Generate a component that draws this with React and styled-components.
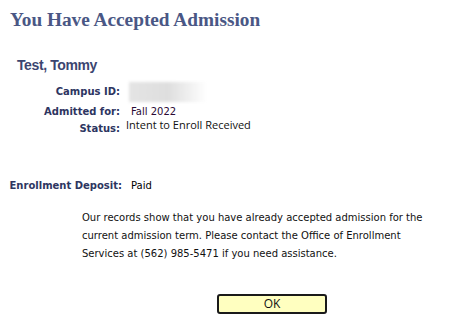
import React from "react";
import styled, { createGlobalStyle } from "styled-components";

const Global = createGlobalStyle`
  html, body { margin: 0; padding: 0; background: #ffffff; }
  body { width: 456px; height: 332px; overflow: hidden; }
`;

const Page = styled.div`
  width: 456px;
  height: 332px;
  box-sizing: border-box;
  font-family: "DejaVu Sans", Verdana, sans-serif;
  color: #000;
`;

const Title = styled.h1`
  margin: 0;
  padding: 9px 0 0 10px;
  font-family: "Liberation Serif", "Times New Roman", serif;
  font-weight: bold;
  font-size: 19.3px;
  line-height: 22px;
  color: #4a5785;
`;

const Name = styled.h2`
  margin: 0;
  padding: 26px 0 0 17px;
  font-family: "Liberation Sans", Arial, sans-serif;
  font-weight: bold;
  font-size: 14px;
  line-height: 16px;
  letter-spacing: -0.4px;
  color: #3b4570;
`;

const Info = styled.div`
  display: grid;
  grid-template-columns: 112px auto;
  column-gap: 11px;
  align-items: center;
  padding-left: 8px;
  margin-top: ${(p) => p.$top || 0}px;
`;

const Label = styled.div`
  display: flex;
  justify-content: flex-end;
  white-space: nowrap;
  font-weight: bold;
  font-size: 10px;
  color: #2d3561;
  height: ${(p) => p.$h || 18}px;
  line-height: ${(p) => p.$h || 18}px;
  margin-right: ${(p) => p.$shift || 0}px;
`;

const Value = styled.div`
  font-size: 10px;
  color: ${(p) => p.$color || "#000"};
  height: ${(p) => p.$h || 18}px;
  line-height: ${(p) => p.$h || 18}px;
`;

const StatusValue = styled.div`
  font-family: "Open Sans", "Noto Sans", sans-serif;
  font-size: 11px;
  margin-left: -5px;
  line-height: 14px;
  align-self: start;
  margin-top: -3px;
  color: #111;
`;

const Masked = styled.div`
  width: 78px;
  height: 20px;
  margin-left: -2px;
  background: linear-gradient(90deg, #e4e4e4 0%, #dedede 50%, #ffffff 100%);
  filter: blur(1.5px);
`;

const Message = styled.p`
  margin: 14px 0 0 82px;
  width: 360px;
  font-size: 10px;
  line-height: 18px;
  color: #111;
`;

const ButtonRow = styled.div`
  padding: 30px 0 0 217px;
`;

const OkButton = styled.button`
  width: 110px;
  height: 20px;
  box-sizing: border-box;
  background: #ffffc0;
  border: 2px solid #1a1a1a;
  border-radius: 3px;
  font-family: "Open Sans", "Noto Sans", sans-serif;
  font-size: 12px;
  line-height: 14px;
  color: #111;
  padding: 0;
  cursor: pointer;
`;

export default function App() {
  return (
    <>
      <Global />
      <Page>
        <Title>You Have Accepted Admission</Title>
        <Name>Test, Tommy</Name>
        <Info $top={8}>
          <Label $h={22}>Campus ID:</Label>
          <Masked />
          <Label $h={18}>Admitted for:</Label>
          <Value $color="#2a0a35">Fall 2022</Value>
          <Label $h={16}>Status:</Label>
          <StatusValue>Intent to Enroll Received</StatusValue>
        </Info>
        <Info $top={40}>
          <Label $h={18} $shift={-2}>Enrollment Deposit:</Label>
          <Value>Paid</Value>
        </Info>
        <Message>
          Our records show that you have already accepted admission for the
          current admission term. Please contact the Office of Enrollment
          Services at (562) 985-5471 if you need assistance.
        </Message>
        <ButtonRow>
          <OkButton type="button">OK</OkButton>
        </ButtonRow>
      </Page>
    </>
  );
}
